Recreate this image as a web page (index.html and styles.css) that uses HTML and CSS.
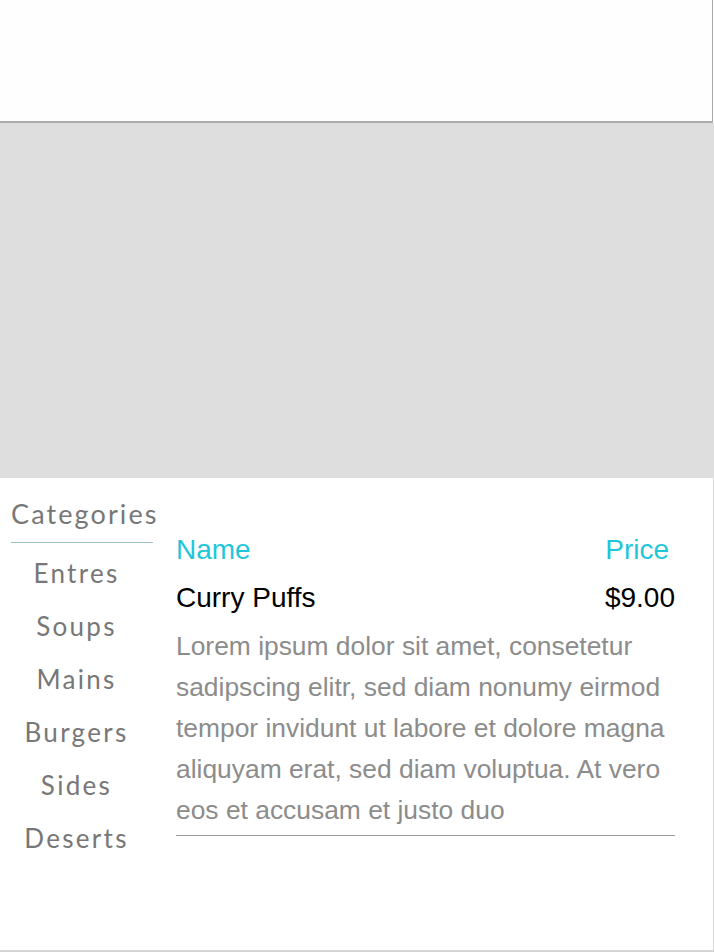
FILE: index.html
```html
<!DOCTYPE html>
<html lang="en">
<head>
<meta charset="utf-8">
<title>Menu</title>
<link rel="stylesheet" href="styles.css">
</head>
<body>
<header class="top-bar"></header>
<div class="hero"></div>
<section class="menu">
  <nav class="categories">
    <h2 class="categories-title">Categories</h2>
    <ul class="category-list">
      <li>Entres</li>
      <li>Soups</li>
      <li>Mains</li>
      <li>Burgers</li>
      <li>Sides</li>
      <li>Deserts</li>
    </ul>
  </nav>
  <div class="items">
    <div class="row head">
      <span>Name</span>
      <span class="price-head">Price</span>
    </div>
    <div class="row item">
      <span>Curry Puffs</span>
      <span>$9.00</span>
    </div>
    <p class="desc">Lorem ipsum dolor sit amet, consetetur sadipscing elitr, sed diam nonumy eirmod tempor invidunt ut labore et dolore magna aliquyam erat, sed diam voluptua. At vero eos et accusam et justo duo</p>
  </div>
</section>
</body>
</html>
```
FILE: styles.css
```css
html, body {
  margin: 0;
  padding: 0;
  background: #fff;
}
body {
  width: 714px;
  font-family: "Liberation Sans", Arial, sans-serif;
}
.top-bar {
  box-sizing: border-box;
  width: 713px;
  height: 123px;
  border-right: 1px solid #a9a9a9;
  border-bottom: 2px solid #ababab;
  background: #fefefe;
}
.hero {
  height: 355px;
  background: #dedede;
}
.menu {
  box-sizing: border-box;
  width: 714px;
  height: 474px;
  display: flex;
  gap: 12px;
  border-right: 1px solid #d6d6d6;
  border-bottom: 2px solid #d6d6d6;
  background: #fff;
}
.categories {
  width: 164px;
  padding-top: 16px;
  font-family: Lato, "Open Sans", sans-serif;
  color: #777;
}
.categories-title {
  margin: 0 11px;
  font-weight: 400;
  font-size: 27px;
  line-height: 40px;
  letter-spacing: 2.1px;
  text-align: center;
  padding: 0 3px 8px 0;
  border-bottom: 1px solid #9dc2c9;
}
.category-list {
  list-style: none;
  margin: 4px 0 0;
  padding: 0 11px 0 0;
}
.category-list li {
  font-size: 26px;
  line-height: 53px;
  letter-spacing: 2.3px;
  text-align: center;
}
.items {
  width: 499px;
  padding-top: 48px;
}
.row {
  display: flex;
  justify-content: space-between;
  font-size: 28px;
  line-height: 48px;
}
.head {
  color: #1fc6da;
}
.price-head {
  padding-right: 6px;
}
.item {
  color: #000;
}
.desc {
  margin: 4px 0 0;
  padding-bottom: 4px;
  font-size: 26.4px;
  line-height: 41px;
  color: #8c8c8c;
  border-bottom: 1px solid #9a9a9a;
}
```
